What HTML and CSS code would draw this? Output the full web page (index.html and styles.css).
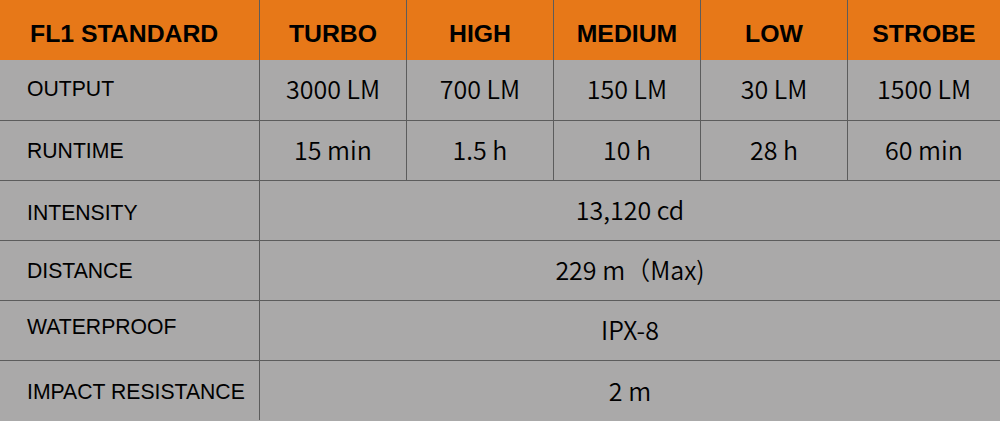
FILE: index.html
```html
<!DOCTYPE html>
<html lang="en">
<head>
<meta charset="utf-8">
<title>FL1 Standard</title>
<link rel="stylesheet" href="styles.css">
</head>
<body>
<div class="spec">
  <div class="cell head label">FL1 STANDARD</div>
  <div class="cell head">TURBO</div>
  <div class="cell head">HIGH</div>
  <div class="cell head">MEDIUM</div>
  <div class="cell head">LOW</div>
  <div class="cell head">STROBE</div>

  <div class="cell label first">OUTPUT</div>
  <div class="cell val first">3000 LM</div>
  <div class="cell val first">700 LM</div>
  <div class="cell val first">150 LM</div>
  <div class="cell val first">30 LM</div>
  <div class="cell val first">1500 LM</div>

  <div class="cell label">RUNTIME</div>
  <div class="cell val">15 min</div>
  <div class="cell val">1.5 h</div>
  <div class="cell val">10 h</div>
  <div class="cell val">28 h</div>
  <div class="cell val">60 min</div>

  <div class="cell label lbl-low">INTENSITY</div>
  <div class="cell val span">13,120 cd</div>

  <div class="cell label">DISTANCE</div>
  <div class="cell val span">229 m（Max)</div>

  <div class="cell label lbl-high">WATERPROOF</div>
  <div class="cell val span">IPX-8</div>

  <div class="cell label last">IMPACT RESISTANCE</div>
  <div class="cell val span last">2 m</div>
</div>
</body>
</html>
```

FILE: styles.css
```css
html, body {
  margin: 0;
  padding: 0;
  background: #aaa9a9;
}

.spec {
  display: grid;
  grid-template-columns: 259px 147px 147px 147px 147px 1fr;
  grid-auto-rows: 60px;
  width: 1000px;
  background: #aaa9a9;
  color: #000;
}

.cell {
  box-sizing: border-box;
  display: flex;
  align-items: center;
  justify-content: center;
  border-top: 1px solid #5c5c5c;
  border-left: 1px solid #5c5c5c;
}

.cell.label {
  border-left: none;
  justify-content: flex-start;
  padding-left: 27px;
  font-family: "Liberation Sans", Arial, sans-serif;
  font-size: 21.2px;
}

.cell.head {
  border-top: none;
  background: #e77818;
  font-family: "Liberation Sans", Arial, sans-serif;
  font-weight: bold;
  font-size: 24.8px;
  padding-top: 8px;
}

.cell.head.label {
  padding-left: 30px;
}

.cell.first {
  border-top: none;
}

.cell.label.first {
  padding-bottom: 2px;
}

.lbl-low {
  padding-top: 5px;
}

.lbl-high {
  padding-bottom: 7px;
}

.cell.last {
  height: 61px;
  padding-top: 2px;
}

.cell.val {
  font-family: "Noto Sans CJK SC", "Noto Sans", sans-serif;
  font-weight: 350;
  font-size: 25px;
  line-height: 1;
  padding-bottom: 3px;
}

.cell.val.last {
  padding-top: 0;
  padding-bottom: 1px;
}

.cell.span {
  grid-column: 2 / -1;
}
```
